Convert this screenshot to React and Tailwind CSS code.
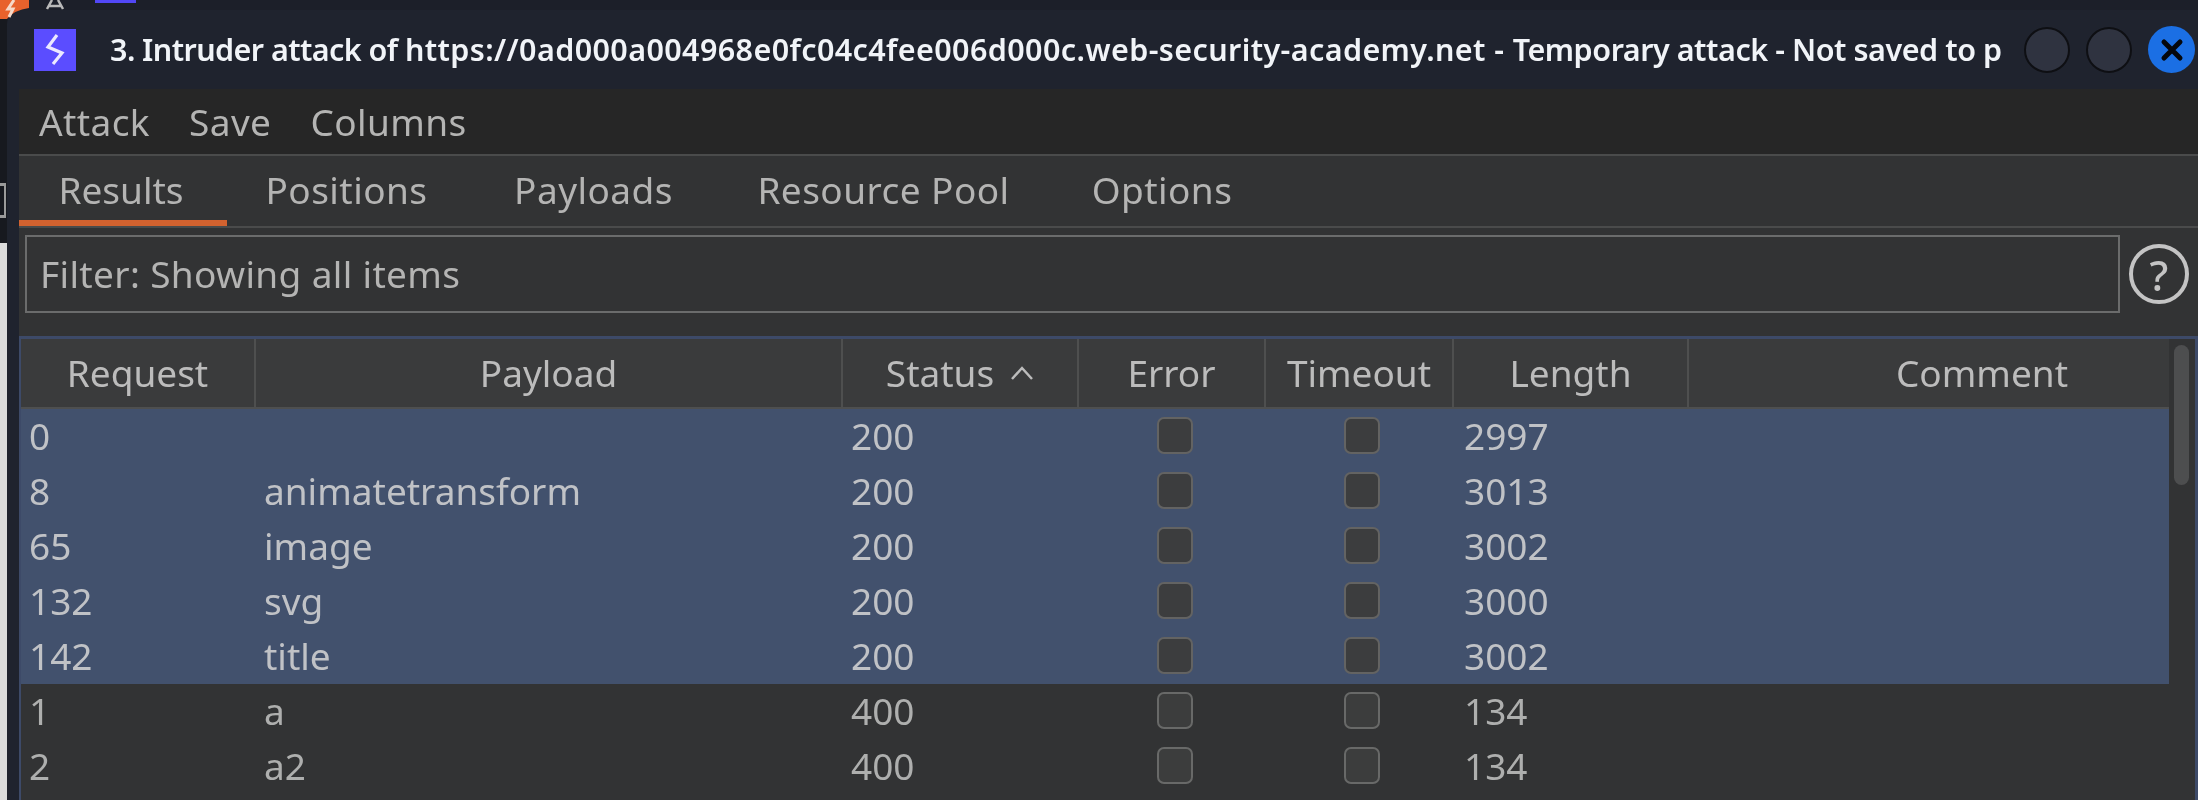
const FONT = "font-['Noto_Sans','Liberation_Sans',sans-serif]";
const COLS = "grid grid-cols-[235px_587px_236px_187px_188px_235px_480px]";

const rows = [
  ["0", "", "200", "2997", true],
  ["8", "animatetransform", "200", "3013", true],
  ["65", "image", "200", "3002", true],
  ["132", "svg", "200", "3000", true],
  ["142", "title", "200", "3002", true],
  ["1", "a", "400", "134", false],
  ["2", "a2", "400", "134", false],
  ["", "", "", "", false],
];

function Check({ selected }) {
  return (
    <div className={`mt-[8px] h-[37px] w-[36px] rounded-[7px] border-[2.5px] ${selected ? "border-[#636362] bg-[#3c3d3e]" : "border-[#686968] bg-[#3c3d3d]"}`} />
  );
}

function Head({ children, last }) {
  return (
    <div className={`flex h-[68px] items-center justify-center gap-[16px] text-[#bcbcbc] ${last ? "pl-[106px]" : "border-r-2 border-[#4e4f4f]"}`}>
      {children}
    </div>
  );
}

function Row({ r }) {
  const [req, pay, status, len, sel] = r;
  return (
    <div className={`${COLS} h-[55px] shrink-0 items-start text-[37px] leading-[53px] ${sel ? "bg-[#42516d] text-[#c0c2c6]" : "text-[#aeafae]"}`}>
      <div className="pl-[8px]">{req}</div>
      <div className="pl-[8px]">{pay}</div>
      <div className="pl-[8px]">{status}</div>
      <div className="flex justify-center pl-[4px]"><Check selected={sel} /></div>
      <div className="flex justify-center pl-[4px]"><Check selected={sel} /></div>
      <div className="pl-[10px]">{len}</div>
      <div />
    </div>
  );
}

export default function App() {
  return (
    <div className={`${FONT} relative flex h-[800px] w-[2198px] flex-col overflow-hidden bg-[#15171d] blur-[0.6px]`}>
      {/* desktop strip behind the window */}
      <div className="flex h-[10px] shrink-0 bg-[#1c1f29]">
        <div className="ml-[95px] h-[3px] w-[41px] bg-[#5247f5]" />
      </div>
      <svg className="absolute left-0 top-0 z-10" width="70" height="20" viewBox="0 0 70 20">
        <path d="M0 0H29V8Q14 10 7 19H0Z" fill="#e8622c" />
        <path d="M14 0L8 9L13 9L9 17" fill="none" stroke="#f6d9c8" strokeWidth="3" />
        <path d="M47 9L52 0M63 9L58 0M49 6H61" stroke="#b9b9b9" strokeWidth="2.5" fill="none" />
      </svg>

      <div className="flex min-h-0 flex-1">
        <div className="flex w-[7px] shrink-0 flex-col bg-[#17191f]">
          <div className="mt-[173px] h-[35px] w-[6px] shrink-0 border-y-[3px] border-r-[2px] border-[#9a9a9a]" />
          <div className="h-[25px] shrink-0" />
          <div className="flex-1 bg-[#dcdcdc]" />
        </div>

        {/* window */}
        <div className="flex min-w-0 flex-1 flex-col rounded-tl-[14px] bg-[#1f232e]">
          <div className="flex h-[79px] shrink-0 items-center">
            <div className="ml-[27px] flex h-[42px] w-[42px] items-center justify-center bg-[#5b4dff]">
              <svg width="22" height="32" viewBox="0 0 22 32">
                <path d="M13 1L4 13L18 19L9 30" fill="none" stroke="#ece9ff" strokeWidth="3.2" />
              </svg>
            </div>
            <div className="ml-[34px] w-[1900px] overflow-hidden whitespace-nowrap text-[30.5px] font-semibold text-[#f1f4f8]">
              <span className="tracking-[-0.57px]">3. Intruder attack of </span>
              <span className="tracking-[0.39px]">https://0ad000a004968e0fc04c4fee006d000c.web-security-academy.net - </span>
              <span className="tracking-[-0.45px]">Temporary attack - Not saved to p</span>
            </div>
            <div className="ml-[14px] h-[46px] w-[46px] shrink-0 rounded-full border-2 border-[#0e0f13] bg-[#2f3340]" />
            <div className="ml-[16px] h-[46px] w-[46px] shrink-0 rounded-full border-2 border-[#0e0f13] bg-[#2f3340]" />
            <div className="ml-[16px] flex h-[47px] w-[47px] shrink-0 items-center justify-center rounded-full bg-[#1b6fe4]">
              <svg width="24" height="24" viewBox="0 0 24 24">
                <path d="M4 4L20 20M20 4L4 20" stroke="#05070c" strokeWidth="5" strokeLinecap="round" />
              </svg>
            </div>
          </div>

          <div className="ml-[12px] flex min-h-0 flex-1 flex-col bg-[#323334]">
            <div className="flex h-[65px] shrink-0 items-center gap-[39px] bg-[#262626] pl-[20px] text-[37px] tracking-[0.4px] text-[#b4b4b3]">
              <span>Attack</span>
              <span>Save</span>
              <span>Columns</span>
            </div>
            <div className="flex h-[74px] shrink-0 border-y-2 border-[#4a4b4b] text-[37px] tracking-[0.45px] text-[#b4b4b3]">
              <div className="flex w-[208px] items-center justify-center border-b-[6px] border-[#d2622f] pt-[4px] pr-[4px] tracking-normal">Results</div>
              <div className="flex w-[239px] items-center justify-center pb-[2px]">Positions</div>
              <div className="flex w-[255px] items-center justify-center pb-[2px]">Payloads</div>
              <div className="flex w-[325px] items-center justify-center pb-[2px]">Resource Pool</div>
              <div className="flex w-[232px] items-center justify-center pb-[2px]">Options</div>
            </div>
            <div className="mt-[7px] flex h-[78px] shrink-0 items-center pl-[6px]">
              <div className="flex h-full w-[2095px] items-center border-2 border-[#6b6c6c] pl-[13px] text-[37px] tracking-[0.35px] text-[#b4b4b3]">
                Filter: Showing all items
              </div>
              <div className="ml-[9px] flex h-[60px] w-[60px] items-center justify-center rounded-full border-[4px] border-[#c4c4c4] text-[42px] font-medium text-[#c4c4c4]">?</div>
            </div>

            <div className="mt-[23px] flex min-h-0 flex-1 border-r-[3px] border-t-[3px] border-l-[2px] border-[#3d4a68]">
              <div className="flex w-[2148px] shrink-0 flex-col">
                <div className={`${COLS} h-[70px] shrink-0 border-b-2 border-[#4e4f4f] bg-[#3a3b3c] text-[37px]`}>
                  <Head>Request</Head>
                  <Head>Payload</Head>
                  <Head>
                    <span>Status</span>
                    <svg width="24" height="14" viewBox="0 0 24 14">
                      <path d="M2 13L12 2L22 13" fill="none" stroke="#bcbcbc" strokeWidth="2.5" />
                    </svg>
                  </Head>
                  <Head>Error</Head>
                  <Head>Timeout</Head>
                  <Head>Length</Head>
                  <Head last>Comment</Head>
                </div>
                {rows.map((r, i) => <Row key={i} r={r} />)}
              </div>
              <div className="flex-1 bg-[#323334] pl-[5px] pt-[6px]">
                <div className="h-[140px] w-[15px] rounded-full bg-[#4d4e4f]" />
              </div>
            </div>
          </div>
        </div>
      </div>
    </div>
  );
}
